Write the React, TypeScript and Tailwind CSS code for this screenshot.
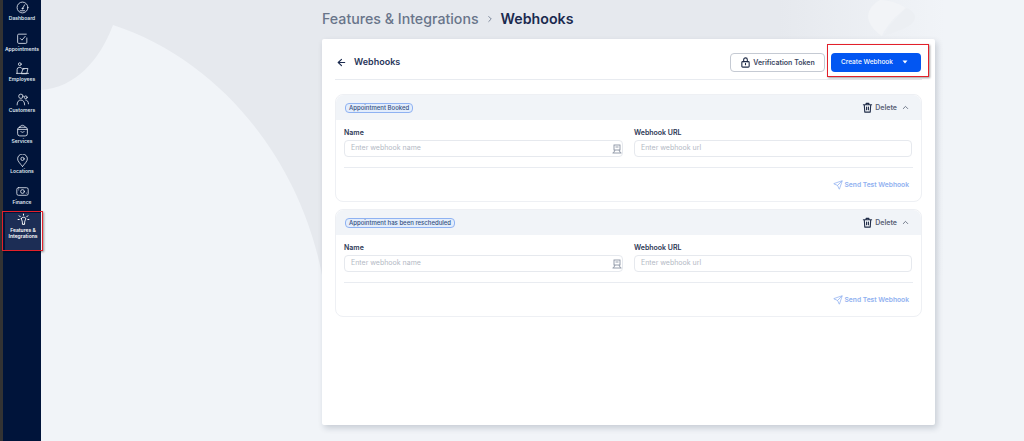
import { ArrowLeft, ChevronRight, ChevronUp, Send } from "lucide-react";
import type { ReactNode } from "react";

function Ico({ children, s = 13, w = 0.85, className = "" }: { children: ReactNode; s?: number; w?: number; className?: string }) {
  return (
    <svg className={className} width={s} height={s} viewBox="0 0 24 24" fill="none" stroke="currentColor" strokeWidth={(w * 24) / s} strokeLinecap="round" strokeLinejoin="round">
      {children}
    </svg>
  );
}

const nav: { label: string; icon: ReactNode }[] = [
  { label: "Dashboard", icon: <><circle cx="12" cy="12" r="10" /><path d="M12 14l4-7M8 18h8" /><circle cx="12" cy="14" r="1" /></> },
  { label: "Appointments", icon: <><path d="M20 11v8a2 2 0 0 1-2 2H5a2 2 0 0 1-2-2V6a2 2 0 0 1 2-2h14" /><path d="M8 12l3 3 6-7" /></> },
  { label: "Employees", icon: <><circle cx="7" cy="4" r="2.6" /><path d="M2 21v-7a4 4 0 0 1 4-4h3l3 3h3" /><path d="M10 21l3-9h9l-2 9z" /><path d="M1 21h22" /></> },
  { label: "Customers", icon: <><circle cx="9" cy="6" r="4" /><path d="M2 22c0-6 3-9 7-9s7 3 7 9" /><circle cx="18" cy="8" r="2.6" /><path d="M18 13c3 0 5 3 5 7" /></> },
  { label: "Services", icon: <><rect x="3" y="6" width="18" height="16" rx="4" /><path d="M7 6c0-5 10-5 10 0M3 10h18M9 14c1 2 5 2 6 0" /></> },
  { label: "Locations", icon: <><path d="M12 23c-5-6-9-10-9-14a9 9 0 0 1 18 0c0 4-4 8-9 14z" /><circle cx="12" cy="9" r="3" /></> },
  { label: "Finance", icon: <><rect x="1.5" y="5" width="21" height="14" rx="3" /><circle cx="12" cy="12" r="3.5" /><path d="M5 9v0M19 15v0" /></> },
];

function Section({ title }: { title: string }) {
  return (
    <div className="h-[108px] rounded-[8px] border border-[#eef0f4] bg-white">
      <div className="flex h-[25px] items-center justify-between rounded-t-[8px] bg-[#f1f4f8] pl-[9px] pr-[11px]">
        <span className="rounded-[4px] border border-[#8fb2f2] bg-[#e3edfc] px-[3px] text-[6px] leading-[8px] font-medium text-[#33507f]">{title}</span>
        <div className="flex items-center text-[#5a6377]">
          <Ico s={11} w={1.1} className="text-[#1f2b47]">
            <path d="M3 6h18M9 6V3h6v3M5 6l1 16h12l1-16M10 11v6M14 11v6" />
          </Ico>
          <span className="ml-[2px] text-[7px] leading-[9px] font-semibold">Delete</span>
          <ChevronUp size={9} strokeWidth={2.2} className="ml-[4px]" />
        </div>
      </div>
      <div className="px-[8px] pt-[8px]">
        <div className="grid grid-cols-[279px_278px] gap-x-[11px]">
          <div>
            <div className="text-[7px] leading-[9px] font-semibold text-[#2b3654]">Name</div>
            <div className="mt-[3px] flex h-[17px] items-center justify-between rounded-[4px] border border-[#e6e9ee] pl-[6px] text-[7px] text-[#b3b9c4]">
              <span>Enter webhook name</span>
              <svg width="10" height="10" viewBox="0 0 10 10" fill="none" stroke="#8a93a3" strokeWidth="0.9">
                <rect x="2" y="1" width="6" height="5" />
                <path d="M0.5 9h9M3 6L1.5 9M7 6l1.5 3M3.5 3h3" />
              </svg>
            </div>
          </div>
          <div>
            <div className="text-[7px] leading-[9px] font-semibold text-[#2b3654]">Webhook URL</div>
            <div className="mt-[3px] flex h-[17px] items-center rounded-[4px] border border-[#e6e9ee] pl-[6px] text-[7px] text-[#b3b9c4]">Enter webhook url</div>
          </div>
        </div>
        <div className="mt-[10px] h-px bg-[#e9ecf1]" />
        <div className="mt-[12px] flex items-center justify-end pr-[4px] text-[#8fb0f0]">
          <Send size={10} strokeWidth={1.8} />
          <span className="ml-[2px] text-[6.7px] leading-[9px] font-semibold">Send Test Webhook</span>
        </div>
      </div>
    </div>
  );
}

export default function App() {
  return (
    <div className="relative flex h-[441px] w-[1024px] overflow-hidden bg-[#f1f4f8] font-['Inter',sans-serif]">
      <svg className="absolute inset-0" width="1024" height="441" viewBox="0 0 1024 441">
        <defs>
          <linearGradient id="fade" gradientUnits="userSpaceOnUse" x1="41" y1="0" x2="1024" y2="0">
            <stop offset="0" stopColor="#e6e9ee" />
            <stop offset="0.75" stopColor="#e6e9ee" />
            <stop offset="0.92" stopColor="#f1f4f8" />
          </linearGradient>
        </defs>
        <path d="M41 0H1024V60L322 275C300 160 220 60 113 25C100 60 75 88 41 90Z" fill="url(#fade)" />
        <path d="M322 39H1024V275H322Z" fill="url(#fade)" />
        <path d="M880 0C866 8 862 22 882 36C885 28 895 16 906 8C900 4 890 0 880 0Z" fill="#f2f4f7" />
        <path d="M884 36C892 32 916 28 915 16C914 12 910 9 906 8C898 16 888 26 884 36Z" fill="#eceff3" />
      </svg>
      <aside className="relative z-10 ml-[3px] flex h-full w-[38px] shrink-0 flex-col items-center bg-[#00143a] shadow-[-3px_0_0_#333]">
        {nav.map(({ label, icon }) => (
          <div key={label} className="flex h-[30.67px] w-full flex-col items-center pt-[1px] text-[#dfe5ef]">
            <Ico>{icon}</Ico>
            <span className="mt-[1px] whitespace-nowrap text-[5px] leading-[6px] font-semibold">{label}</span>
          </div>
        ))}
        <div className="relative mt-[-2px] h-[37px] w-[36px] self-end bg-[#1c2d55] text-center text-white">
          <Ico s={13} w={1} className="mx-auto">
            <path d="M8 10c0-3 8-3 8 0 0 3-2 4-2 8v3h-4v-3c0-4-2-5-2-8z" />
            <path d="M12 2v2M4 5l2 2M20 5l-2 2M2 12h2M20 12h2" />
          </Ico>
          <div className="mt-[1px] text-[5px] leading-[6.3px] font-semibold">Features &amp;<br />Integrations</div>
          <div className="absolute left-[-3px] top-[-2px] h-[40px] w-[41px] border-[1.5px] border-[#e3202a] shadow-[1px_1px_2px_#0006]" />
        </div>
      </aside>
      <main className="relative z-10 ml-[281px] w-[613px]">
        <div className="flex h-[39px] items-center pb-[2px] text-[14.2px] font-medium">
          <span className="text-[#69758a]">Features &amp; Integrations</span>
          <ChevronRight size={10} strokeWidth={2} className="ml-[6px] mr-[6px] text-[#69758a]" />
          <span className="font-semibold text-[#1b2a4e]">Webhooks</span>
        </div>
        <div className="h-[386px] rounded-[2px] bg-white px-[13px] shadow-[2px_3px_6px_#0f1f3d30]">
          <div className="flex h-[41px] items-center justify-between border-b border-[#e8ebf0] pt-[6px]">
            <div className="flex items-center text-[#1b2a4e]">
              <ArrowLeft size={11} strokeWidth={2.4} className="ml-[1px]" />
              <span className="ml-[7px] text-[9px] leading-[12px] font-semibold text-[#28365a]">Webhooks</span>
            </div>
            <div className="flex items-center gap-[6px] pr-[1px]">
              <button className="flex h-[19px] w-[95px] items-center justify-center rounded-[4px] border border-[#c5cad3] text-[7px] leading-[9px] font-semibold text-[#3c4762]">
                <Ico s={11} w={1.1} className="mr-[2px] text-[#1f2b47]">
                  <rect x="4" y="10" width="16" height="12" rx="2" />
                  <path d="M8 10V6a4 4 0 0 1 8 0v4M12 14v3" />
                </Ico>
                Verification Token
              </button>
              <div className="relative">
                <button className="flex h-[19px] w-[90px] items-center justify-center rounded-[4px] bg-[#0256f2] pr-[3px] text-[6.5px] leading-[9px] font-medium text-white">
                  Create Webhook
                  <svg className="ml-[9px]" width="6" height="4" viewBox="0 0 6 4"><path d="M0.5 0.5h5L3 3.5z" fill="white" /></svg>
                </button>
                <div className="absolute left-[-4px] top-[-9px] h-[33px] w-[102px] border-[1.5px] border-[#e3202a] shadow-[1px_1px_2px_#0006]" />
              </div>
            </div>
          </div>
          <div className="mt-[14px] flex flex-col gap-[7px]">
            <Section title="Appointment Booked" />
            <Section title="Appointment has been rescheduled" />
          </div>
        </div>
      </main>
    </div>
  );
}
